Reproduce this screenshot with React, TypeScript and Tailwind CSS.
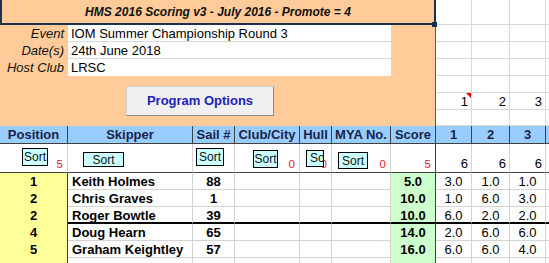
import React from "react";

type Row = { pos: string; name: string; sail: string; score: string; r: string[]; thick?: boolean };

const rows: Row[] = [
  { pos: "1", name: "Keith Holmes", sail: "88", score: "5.0", r: ["3.0", "1.0", "1.0"] },
  { pos: "2", name: "Chris Graves", sail: "1", score: "10.0", r: ["1.0", "6.0", "3.0"] },
  { pos: "2", name: "Roger Bowtle", sail: "39", score: "10.0", r: ["6.0", "2.0", "2.0"], thick: true },
  { pos: "4", name: "Doug Hearn", sail: "65", score: "14.0", r: ["2.0", "6.0", "6.0"] },
  { pos: "5", name: "Graham Keightley", sail: "57", score: "16.0", r: ["6.0", "6.0", "4.0"] },
];

const GRID =
  "grid grid-cols-[68px_125px_42px_65px_32px_59px_45px_36px_38px_36px_3px]";

function SortBtn({ className, clip }: { className: string; clip?: boolean }) {
  return (
    <div
      className={
        "absolute z-10 bg-[#ccffff] border border-black text-[12px] leading-[14px] text-[#111] flex overflow-hidden " +
        (clip ? "items-start justify-start pl-[3px] " : "items-center justify-center ") +
        className
      }
    >
      Sort
    </div>
  );
}

function RedNum({ v }: { v: string }) {
  return (
    <div className="absolute right-[4px] bottom-[2px] text-[11.5px] leading-[11px] text-[#dd1e2f]">{v}</div>
  );
}

export default function App() {
  const header = ["Position", "Skipper", "Sail #", "Club/City", "Hull", "MYA No.", "Score", "1", "2", "3"];
  return (
    <div className="w-[549px] h-[263px] overflow-hidden bg-white font-['Liberation_Sans',Arial,sans-serif] text-[13px] text-black">
      {/* top section */}
      <div className="flex h-[126px]">
        <div className="relative w-[436px] bg-[#ffcc99] flex flex-col">
          <div className="h-[25px] border-l-2 border-r-2 border-b-2 border-[#1b3350] flex items-center justify-center text-[12px] font-bold italic text-[#111]">
            HMS 2016 Scoring v3 - July 2016 - Promote = 4
          </div>
          <div className="absolute left-[432px] top-[22px] w-[5px] h-[5px] bg-[#1b3350]" />
          <div className="flex-1 border-r border-[#5a5a5a] flex flex-col">
            {[
              ["Event", "IOM Summer Championship Round 3"],
              ["Date(s)", "24th June 2018"],
              ["Host Club", "LRSC"],
            ].map(([l, v], i) => (
              <div key={l} className="flex h-[17px]">
                <div className="w-[68px] text-right pr-[4px] italic leading-[17px] text-[#111]">{l}</div>
                <div
                  className={
                    "w-[323px] bg-white pl-[3px] leading-[17px] " +
                    (i < 2 ? "border-b border-[#d9d9d9]" : "")
                  }
                >
                  {v}
                </div>
              </div>
            ))}
            <div className="mt-[10px] ml-[126px] w-[148px] h-[30px] bg-[#f0f0f0] border border-[#d0d0d0] border-r-[#8a8a8a] border-b-[#8a8a8a] flex items-center justify-center font-bold text-[13px] text-[#2222bb]">
              Program Options
            </div>
          </div>
        </div>
        <div className="flex-1 flex flex-col">
          {[25, 17, 17, 17, 17, 17, 16].map((h, ri) => (
            <div
              key={ri}
              className="grid grid-cols-[36px_38px_36px_3px] border-b border-[#d9d9d9]"
              style={{ height: h }}
            >
              {[0, 1, 2, 3].map((ci) => (
                <div
                  key={ci}
                  className={
                    "relative text-right pr-[3px] leading-[17px] " + (ci < 3 ? "border-r border-[#d9d9d9]" : "")
                  }
                >
                  {ri === 5 && ci < 3 ? String(ci + 1) : ""}
                  {ri === 5 && ci === 0 ? (
                    <div className="absolute right-0 top-0 w-0 h-0 border-t-[5px] border-t-[#e00000] border-l-[5px] border-l-transparent" />
                  ) : null}
                </div>
              ))}
            </div>
          ))}
        </div>
      </div>

      {/* header row */}
      <div className={GRID}>
        {header.map((h) => (
          <div
            key={h}
            className="h-[18px] bg-[#99ccff] border-r border-b border-[#404040] flex items-center justify-center font-bold text-[13px] text-[#17254a] whitespace-nowrap overflow-hidden"
          >
            {h}
          </div>
        ))}
        <div className="h-[18px] bg-[#99ccff] border-b border-[#404040]" />
      </div>

      {/* sort row */}
      <div className={GRID + " h-[29px]"}>
        <div className="relative border-r border-b border-[#d4d4d4] border-b-[#404040]">
          <SortBtn className="left-[22px] top-[4px] w-[26px] h-[18px]" />
          <RedNum v="5" />
        </div>
        <div className="relative border-r border-b border-[#d4d4d4] border-b-[#404040]">
          <SortBtn className="left-[15px] top-[8px] w-[41px] h-[15px]" />
        </div>
        <div className="relative border-r border-b border-[#d4d4d4] border-b-[#404040]">
          <SortBtn className="left-[3px] top-[4px] w-[28px] h-[18px]" />
        </div>
        <div className="relative border-r border-b border-[#d4d4d4] border-b-[#404040]">
          <SortBtn className="left-[18px] top-[6px] w-[25px] h-[18px]" />
          <RedNum v="0" />
        </div>
        <div className="relative border-r border-b border-[#d4d4d4] border-b-[#404040]">
          <SortBtn className="left-[6px] top-[6px] w-[18px] h-[17px]" clip />
          <RedNum v="0" />
        </div>
        <div className="relative border-r border-b border-[#d4d4d4] border-b-[#404040]">
          <SortBtn className="left-[6px] top-[8px] w-[30px] h-[17px]" />
          <RedNum v="0" />
        </div>
        <div className="relative border-r border-b border-[#404040]">
          <RedNum v="5" />
        </div>
        {[0, 1, 2].map((i) => (
          <div
            key={i}
            className="flex items-end justify-end pr-[3px] pb-[1px] leading-[14px] border-r border-b border-[#d4d4d4] border-b-[#404040]"
          >
            6
          </div>
        ))}
        <div className="border-b border-[#404040]" />
      </div>

      {/* data rows */}
      {[...rows, null].map((r, i) => {
        const bb = r && r.thick ? "border-b-2 border-b-black" : "border-b border-b-[#d4d4d4]";
        const cell = "h-[17px] leading-[17px] border-r border-r-[#d4d4d4] " + bb;
        return (
          <div key={i} className={GRID}>
            <div className="h-[17px] leading-[17px] bg-[#ffff99] border-r border-r-[#404040] text-center font-bold">
              {r?.pos}
            </div>
            <div className={cell + " pl-[4px] font-bold whitespace-nowrap"}>{r?.name}</div>
            <div className={cell + " text-center font-bold"}>{r?.sail}</div>
            <div className={cell} />
            <div className={cell} />
            <div className={cell} />
            <div
              className={
                "h-[17px] leading-[17px] bg-[#ccffcc] border-r border-r-[#404040] text-center font-bold " +
                (r && r.thick ? "border-b-2 border-b-black" : "")
              }
            >
              {r?.score}
            </div>
            {[0, 1, 2].map((k) => (
              <div key={k} className={cell + " text-center"}>
                {r?.r[k]}
              </div>
            ))}
            <div className={"h-[17px] " + bb} />
          </div>
        );
      })}
    </div>
  );
}
